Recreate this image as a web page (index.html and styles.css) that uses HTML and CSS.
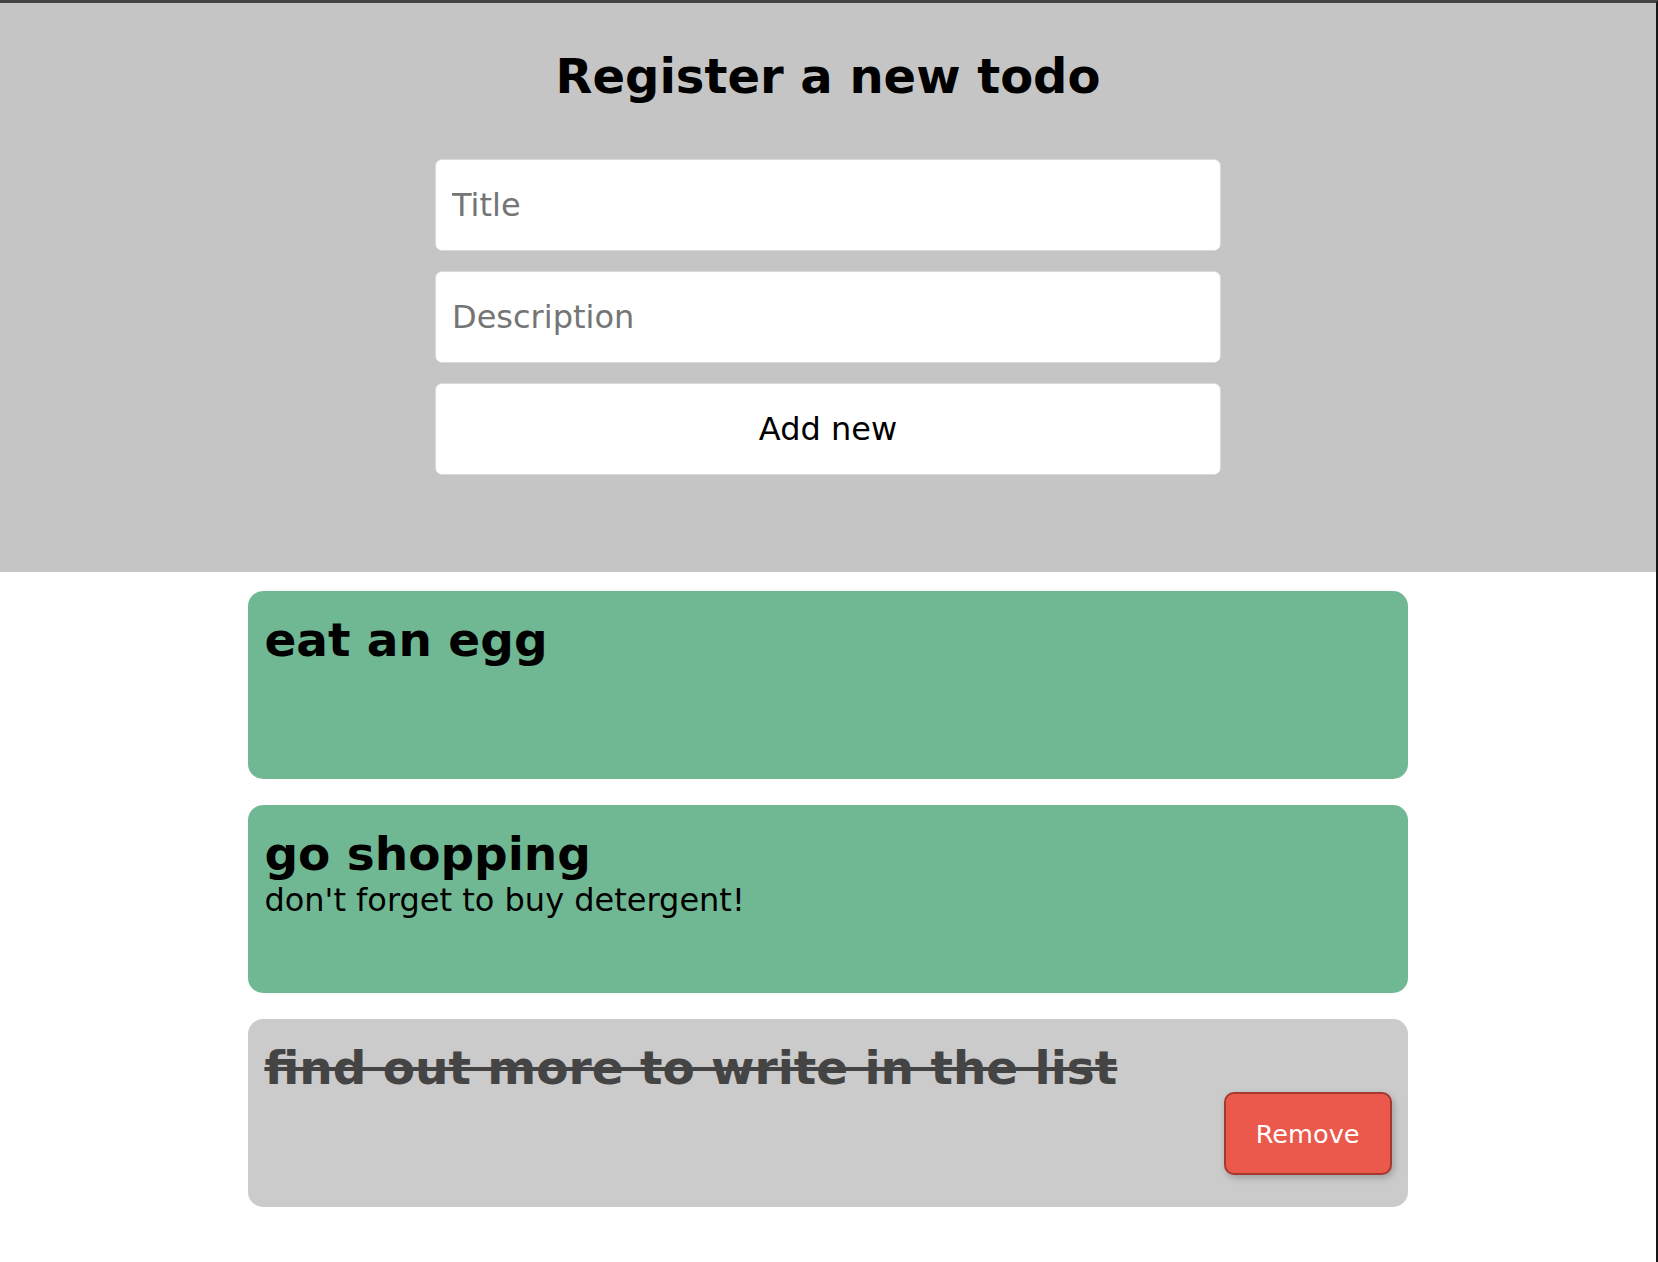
FILE: index.html
```html
<!DOCTYPE html>
<html lang="en">
<head>
<meta charset="utf-8">
<title>Todos</title>
<link rel="stylesheet" href="styles.css">
</head>
<body>
<div class="frame">
  <header class="register">
    <h1 class="register__title">Register a new todo</h1>
    <form class="todo-form">
      <input class="todo-form__field" type="text" placeholder="Title">
      <input class="todo-form__field" type="text" placeholder="Description">
      <button class="todo-form__field todo-form__submit" type="button">Add new</button>
    </form>
  </header>
  <main class="todo-list">
    <article class="todo todo--open">
      <h2 class="todo__title">eat an egg</h2>
    </article>
    <article class="todo todo--open">
      <h2 class="todo__title">go shopping</h2>
      <p class="todo__desc">don't forget to buy detergent!</p>
    </article>
    <article class="todo todo--done">
      <h2 class="todo__title">find out more to write in the list</h2>
      <button class="todo__remove" type="button">Remove</button>
    </article>
  </main>
</div>
</body>
</html>
```
FILE: styles.css
```css
html, body {
  margin: 0;
  padding: 0;
  background: #ffffff;
}

body {
  font-family: "DejaVu Sans", Verdana, sans-serif;
  color: #000;
}

.frame {
  min-height: 100vh;
  box-sizing: border-box;
  border-top: 3px solid #454545;
  border-right: 2px solid #161616;
}

.register {
  background: #c5c5c5;
  padding: 45px 0 97px;
}

.register__title {
  margin: 0;
  text-align: center;
  font-size: 48px;
  font-weight: bold;
  line-height: normal;
}

.todo-form {
  width: 786px;
  margin: 55px auto 0;
  display: flex;
  flex-direction: column;
  gap: 20px;
}

.todo-form__field {
  box-sizing: border-box;
  height: 92px;
  width: 100%;
  margin: 0;
  padding: 0 16px;
  background: #ffffff;
  border: 1px solid #dadada;
  border-radius: 7px;
  font-family: "DejaVu Sans", Verdana, sans-serif;
  font-size: 32px;
  color: #000;
  outline: none;
}

.todo-form__field::placeholder {
  color: #757575;
}

.todo-form__submit {
  text-align: center;
  cursor: pointer;
}

.todo-list {
  width: 70%;
  margin: 19px auto 0;
  display: flex;
  flex-direction: column;
  gap: 26px;
  padding-bottom: 40px;
}

.todo {
  box-sizing: border-box;
  height: 188px;
  padding: 21px 16px 16px;
  border-radius: 15px;
  display: flex;
  flex-direction: column;
  align-items: flex-start;
}

.todo--open {
  background: #70b893;
}

.todo--done {
  background: #cbcbcb;
}

.todo__title {
  margin: 0;
  font-size: 47px;
  font-weight: bold;
  line-height: normal;
}

.todo--done .todo__title {
  color: #444444;
  text-decoration: line-through;
}

.todo__desc {
  margin: 0;
  font-size: 32px;
  line-height: normal;
}

.todo__remove {
  align-self: flex-end;
  margin: -3px 0 0;
  padding: 25px 30px 24px;
  background: #eb584c;
  color: #ffffff;
  border: 2px solid #a3392f;
  border-radius: 10px;
  font-family: "DejaVu Sans", Verdana, sans-serif;
  font-size: 25.6px;
  line-height: normal;
  box-shadow: 2px 3px 7px rgba(0, 0, 0, 0.22);
  cursor: pointer;
}
```
